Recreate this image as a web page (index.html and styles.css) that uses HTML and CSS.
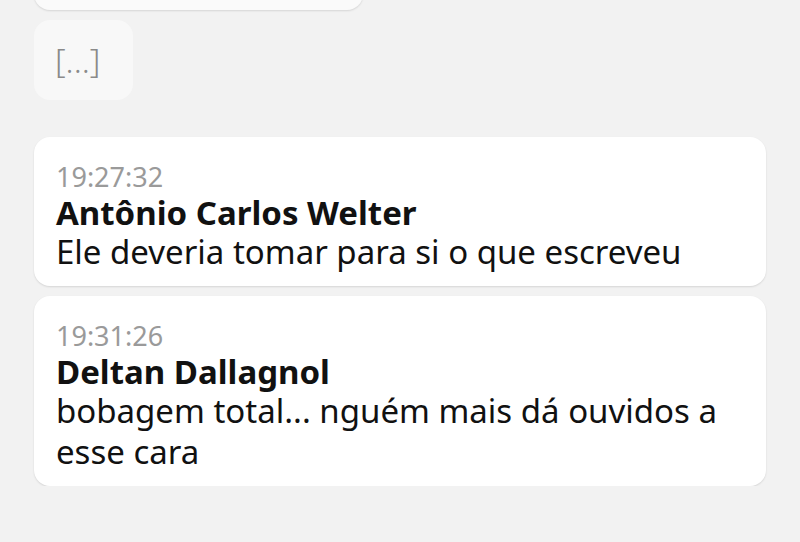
FILE: index.html
```html
<!DOCTYPE html>
<html>
<head>
    <title>Mensagens</title>
    <link rel="stylesheet" href="styles.css">
</head>
<body>
    <div class="chat">
        <div class="card card-cut"></div>

        <div class="card card-gap">
            <span class="ellipsis">[...]</span>
        </div>

        <div class="card message">
            <div class="time">19:27:32</div>
            <div class="author">Antônio Carlos Welter</div>
            <div class="text">Ele deveria tomar para si o que escreveu</div>
        </div>

        <div class="card message">
            <div class="time">19:31:26</div>
            <div class="author">Deltan Dallagnol</div>
            <div class="text">bobagem total... nguém mais dá ouvidos a esse cara</div>
        </div>
    </div>
</body>
</html>
```

FILE: styles.css
```css
body {
    margin: 0;
    background-color: #f2f2f2;
    font-family: "Noto Sans", Arial, sans-serif;
    color: #111;
    overflow: hidden;
}

.chat {
    display: flex;
    flex-direction: column;
    align-items: flex-start;
    gap: 10px;
    padding: 0 34px;
}

.card {
    background-color: #fff;
    border-radius: 16px;
    box-shadow: 0 1px 2px rgba(0, 0, 0, 0.12);
}

.card-cut {
    width: 329px;
    height: 40px;
    margin-top: -30px;
    background-color: #fafafa;
}

.card-gap {
    width: 99px;
    height: 80px;
    box-sizing: border-box;
    display: flex;
    align-items: center;
    padding-left: 21px;
    background-color: #f8f8f8;
    box-shadow: none;
}

.ellipsis {
    font-size: 33px;
    font-weight: 300;
    color: #8a8a8a;
}

.message {
    align-self: stretch;
    padding: 22px 22px 14px;
}

.card-gap + .message {
    margin-top: 27px;
}

.time {
    font-size: 27px;
    line-height: 36px;
    color: #9a9a9a;
}

.author {
    font-size: 33px;
    line-height: 36px;
    font-weight: bold;
}

.text {
    font-size: 33px;
    line-height: 41px;
}
```
